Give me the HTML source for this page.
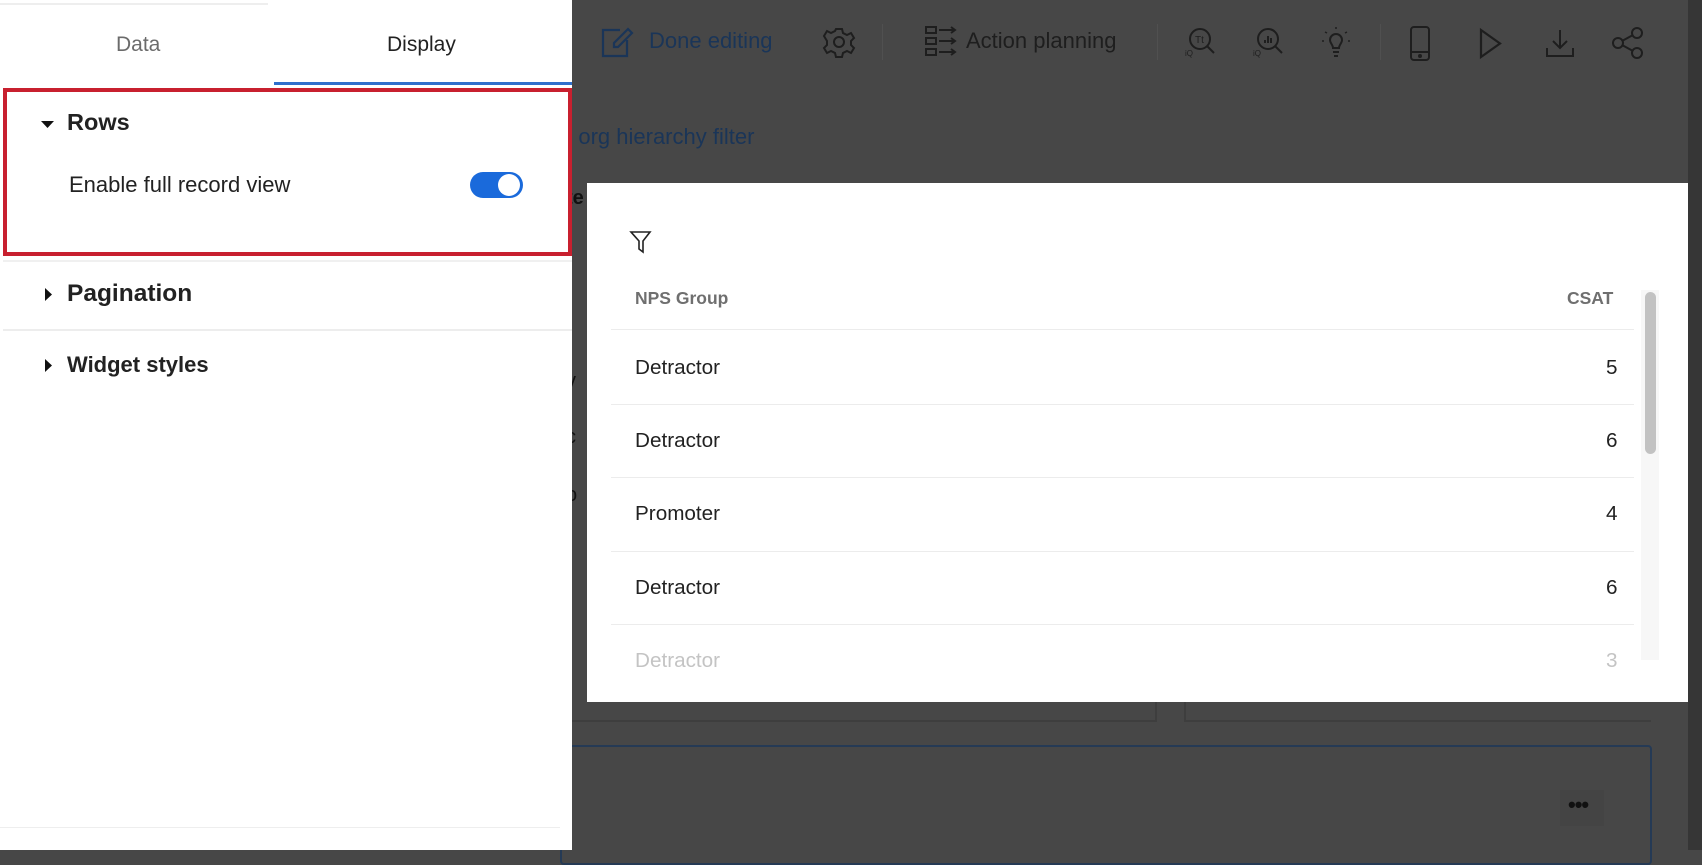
<!DOCTYPE html>
<html><head><meta charset="utf-8"><style>
*{margin:0;padding:0;box-sizing:border-box}
body{width:1702px;height:850px;overflow:hidden;position:relative;background:#474747;font-family:"Liberation Sans",sans-serif}
.a{position:absolute}
.side{left:0;top:0;width:572px;height:850px;background:#fff}
.t{white-space:nowrap}
svg{position:absolute;overflow:visible}
</style></head><body>
<div class="a" style="left:1688px;top:0;width:14px;height:850px;background:#363636"></div>
<svg style="left:602px;top:28px" width="32" height="30" fill="none" stroke="#1a3558" stroke-width="2.2"><path d="M18 2H1v26h24V12"/><path d="M26 1l4 4-14 14H12v-4z"/></svg>
<div class="a t" style="left:649px;top:28px;font-size:22px;color:#1a3558">Done editing</div>
<svg style="left:824px;top:27px" width="30" height="30" fill="none" stroke="#1e1e1e" stroke-width="2"><circle cx="15" cy="15" r="5"/><path d="M12 2h6l1 4 4 2 4-2 3 5-3 3v4l3 3-3 5-4-2-4 2-1 4h-6l-1-4-4-2-4 2-3-5 3-3v-4L0 9l3-5 4 2 4-2z"/></svg>
<div class="a" style="left:882px;top:24px;width:1px;height:36px;background:#505050"></div>
<svg style="left:925px;top:26px" width="34" height="32" fill="none" stroke="#1e1e1e" stroke-width="2"><rect x="1" y="1" width="10" height="6"/><rect x="1" y="12" width="10" height="6"/><rect x="1" y="23" width="10" height="6"/><path d="M14 4h16M26 1l4 3-4 3M14 15h16M26 12l4 3-4 3M14 26h16M26 23l4 3-4 3"/></svg>
<div class="a t" style="left:966px;top:28px;font-size:22px;color:#1e1e1e">Action planning</div>
<div class="a" style="left:1157px;top:24px;width:1px;height:36px;background:#505050"></div>
<svg style="left:1185px;top:26px" width="34" height="34" fill="none" stroke="#1e1e1e" stroke-width="2"><circle cx="15" cy="13" r="10"/><path d="M22 20l7 7"/><text x="10" y="17" font-size="10" fill="#1e1e1e" stroke="none">Tt</text><text x="0" y="30" font-size="8" fill="#1e1e1e" stroke="none">iQ</text></svg>
<svg style="left:1253px;top:26px" width="34" height="34" fill="none" stroke="#1e1e1e" stroke-width="2"><circle cx="15" cy="13" r="10"/><path d="M22 20l7 7M12 17v-3M15 17v-7M18 17v-5"/><text x="0" y="30" font-size="8" fill="#1e1e1e" stroke="none">iQ</text></svg>
<svg style="left:1320px;top:26px" width="32" height="34" fill="none" stroke="#1e1e1e" stroke-width="2"><path d="M10 14a6 6 0 1 1 12 0c0 3-3 5-3 8h-6c0-3-3-5-3-8zM13 26h6M14 30h4"/><path d="M16 1v2M5 6l2 1M27 6l-2 1M2 15h2M28 15h2" stroke-width="1.5"/></svg>
<div class="a" style="left:1380px;top:24px;width:1px;height:36px;background:#505050"></div>
<svg style="left:1410px;top:26px" width="22" height="36" fill="none" stroke="#1e1e1e" stroke-width="2"><rect x="1" y="1" width="18" height="33" rx="3"/><path d="M1 26h18"/><circle cx="10" cy="30" r="1" fill="#1e1e1e"/></svg>
<svg style="left:1479px;top:28px" width="24" height="32" fill="none" stroke="#1e1e1e" stroke-width="2.2"><path d="M2 2v27l19-13.5z"/></svg>
<svg style="left:1545px;top:28px" width="30" height="30" fill="none" stroke="#1e1e1e" stroke-width="2"><path d="M15 2v18M8 13l7 7 7-7M2 20v8h26v-8"/></svg>
<svg style="left:1612px;top:27px" width="32" height="32" fill="none" stroke="#1e1e1e" stroke-width="2"><circle cx="25" cy="6" r="5"/><circle cx="6" cy="16" r="5"/><circle cx="25" cy="26" r="5"/><path d="M10 14l11-6M10 18l11 6"/></svg>
<div class="a t" style="left:560px;top:124px;font-size:22px;color:#1a3558">n org hierarchy filter</div>
<div class="a t" style="left:566px;top:187px;font-size:20px;font-weight:bold;color:#111">te</div>
<div class="a t" style="left:566px;top:370px;font-size:20px;color:#111">v</div>
<div class="a t" style="left:566px;top:426px;font-size:20px;color:#111">c</div>
<div class="a t" style="left:566px;top:484px;font-size:20px;color:#111">o</div>
<div class="a" style="left:572px;top:702px;width:585px;height:20px;border-right:2px solid #3e3e3e;border-bottom:2px solid #3e3e3e"></div>
<div class="a" style="left:1184px;top:702px;width:467px;height:20px;border-left:2px solid #3e3e3e;border-bottom:2px solid #3e3e3e"></div>
<div class="a" style="left:560px;top:745px;width:1092px;height:120px;border:2px solid #253a55;border-radius:4px"></div>
<div class="a" style="left:1560px;top:790px;width:44px;height:36px;background:#444"></div>
<div class="a t" style="left:1568px;top:792px;font-size:22px;font-weight:bold;color:#111;letter-spacing:-1px">•••</div>

<div class="a" style="left:587px;top:183px;width:1101px;height:519px;background:#fff"></div>
<svg style="left:630px;top:231px" width="22" height="22" fill="none" stroke="#222" stroke-width="1.6"><path d="M1 1h19l-7 9v11l-4-3v-8z"/></svg>
<div class="a t" style="left:635px;top:288px;font-size:17.5px;font-weight:bold;color:#6f6f6f">NPS Group</div>
<div class="a t" style="left:1567px;top:288px;font-size:17.5px;font-weight:bold;color:#6f6f6f">CSAT</div>
<div class="a" style="left:611px;top:329px;width:1023px;height:1px;background:#ececec"></div>
<div class="a" style="left:611px;top:404px;width:1023px;height:1px;background:#ececec"></div>
<div class="a" style="left:611px;top:477px;width:1023px;height:1px;background:#ececec"></div>
<div class="a" style="left:611px;top:551px;width:1023px;height:1px;background:#ececec"></div>
<div class="a" style="left:611px;top:624px;width:1023px;height:1px;background:#ececec"></div>
<div class="a t" style="left:635px;top:356px;font-size:20.7px;color:#222">Detractor</div><div class="a t" style="left:1606px;top:356px;font-size:20.7px;color:#222">5</div>
<div class="a t" style="left:635px;top:429px;font-size:20.7px;color:#222">Detractor</div><div class="a t" style="left:1606px;top:429px;font-size:20.7px;color:#222">6</div>
<div class="a t" style="left:635px;top:502px;font-size:20.7px;color:#222">Promoter</div><div class="a t" style="left:1606px;top:502px;font-size:20.7px;color:#222">4</div>
<div class="a t" style="left:635px;top:576px;font-size:20.7px;color:#222">Detractor</div><div class="a t" style="left:1606px;top:576px;font-size:20.7px;color:#222">6</div>
<div class="a t" style="left:635px;top:649px;font-size:20.7px;color:#c4c4c4">Detractor</div><div class="a t" style="left:1606px;top:649px;font-size:20.7px;color:#c4c4c4">3</div>
<div class="a" style="left:1641px;top:290px;width:18px;height:370px;background:#f7f7f7"></div>
<div class="a" style="left:1645px;top:292px;width:11px;height:162px;background:#c2c2c2;border-radius:6px"></div>

<div class="a side"></div>
<div class="a" style="left:0;top:3px;width:268px;height:2px;background:#eee"></div>
<div class="a t" style="left:116px;top:33px;font-size:21px;color:#6b6b6b">Data</div>
<div class="a t" style="left:387px;top:33px;font-size:21px;color:#222">Display</div>
<div class="a" style="left:274px;top:82px;width:298px;height:3px;background:#2f6fcc"></div>
<div class="a" style="left:3px;top:88px;width:569px;height:168px;border:4px solid #c8202f"></div>
<svg style="left:41px;top:121px" width="14" height="8"><path d="M0 0h13L6.5 7z" fill="#111"/></svg>
<div class="a t" style="left:67px;top:109px;font-size:23.5px;font-weight:bold;color:#222">Rows</div>
<div class="a t" style="left:69px;top:172px;font-size:22px;color:#222">Enable full record view</div>
<div class="a" style="left:470px;top:172px;width:53px;height:26px;border-radius:13px;background:#1a6adb"></div>
<div class="a" style="left:498px;top:174px;width:22px;height:22px;border-radius:50%;background:#fff"></div>
<div class="a" style="left:3px;top:260px;width:569px;height:2px;background:#f0f0f0"></div>
<svg style="left:45px;top:288px" width="8" height="14"><path d="M0 0v13l7-6.5z" fill="#111"/></svg>
<div class="a t" style="left:67px;top:280px;font-size:24.5px;font-weight:bold;color:#222">Pagination</div>
<div class="a" style="left:3px;top:329px;width:569px;height:2px;background:#ededed"></div>
<svg style="left:45px;top:359px" width="8" height="14"><path d="M0 0v13l7-6.5z" fill="#111"/></svg>
<div class="a t" style="left:67px;top:352px;font-size:22px;font-weight:bold;color:#222">Widget styles</div>
<div class="a" style="left:0;top:827px;width:560px;height:1px;background:#eee"></div>
</body></html>
